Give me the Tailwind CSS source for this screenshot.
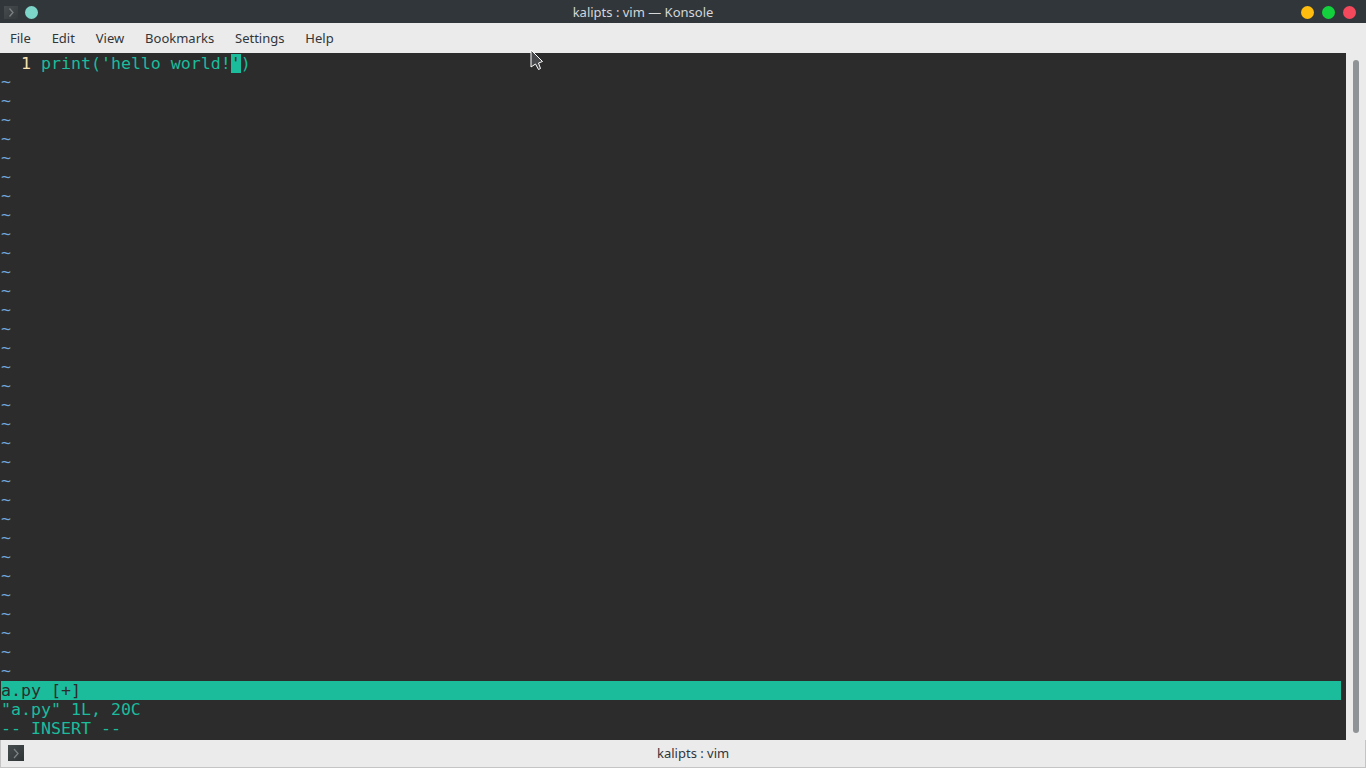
<!DOCTYPE html>
<html>
<head>
<meta charset="utf-8">
<script src="https://cdn.jsdelivr.net/npm/@tailwindcss/browser@4"></script>
</head>
<body class="w-[1366px] h-[768px] overflow-hidden bg-[#ebebeb] font-['Noto_Sans',sans-serif] relative">
<div class="h-[23px] bg-[#31363b] relative flex items-center text-[13px] text-[#d5d7d8] pt-[2px]">
  <div class="absolute inset-0 flex items-center justify-center pr-[80px] pt-[2px]"><span>kalipts : vim — Konsole</span></div>
  <svg class="ml-1 relative" width="14" height="13" viewBox="0 0 14 13"><defs><linearGradient id="g1" x1="0" y1="0" x2="1" y2="1"><stop offset="0" stop-color="#474c4e"/><stop offset="1" stop-color="#33383a"/></linearGradient></defs><rect width="14" height="13" fill="url(#g1)"/><path d="M5.5 2.5 l3.5 4 l-3.5 4" fill="none" stroke="#7b8183" stroke-width="1.3"/></svg>
  <div class="ml-[7px] w-[13px] h-[13px] rounded-full bg-[#7dd5c9] relative"></div>
  <div class="ml-auto mr-[10px] flex gap-2 relative">
    <div class="w-[13px] h-[13px] rounded-full bg-[#fdbc0e]"></div>
    <div class="w-[13px] h-[13px] rounded-full bg-[#13d13c]"></div>
    <div class="w-[13px] h-[13px] rounded-full bg-[#f4495c]"></div>
  </div>
</div>
<div class="h-[30px] bg-[#ebebeb] flex items-center pl-[10px] gap-[20.85px] text-[13px] text-[#31363b] pt-[1px]">
  <span>File</span><span>Edit</span><span>View</span><span>Bookmarks</span><span>Settings</span><span>Help</span>
</div>
<div class="flex h-[687px]">
  <div class="w-[1346px] bg-[#2c2c2c] pt-px pl-px font-['DejaVu_Sans_Mono',monospace] text-[16.6px] leading-[19px] text-[#1abc9c]">
    <div class="h-[19px] flex whitespace-pre"><span class="text-[#f9e2ae]">  1 </span><span>print('hello world!</span><span class="bg-[#1abc9c] text-[#2c2c2c] w-[10px] h-[19px] inline-block">'</span><span>)</span></div>
    <div class="text-[#6fa8dc] mt-[-1px] mb-[1px]">
<div class="h-[19px]">~</div><div class="h-[19px]">~</div><div class="h-[19px]">~</div><div class="h-[19px]">~</div><div class="h-[19px]">~</div><div class="h-[19px]">~</div><div class="h-[19px]">~</div><div class="h-[19px]">~</div><div class="h-[19px]">~</div><div class="h-[19px]">~</div><div class="h-[19px]">~</div><div class="h-[19px]">~</div><div class="h-[19px]">~</div><div class="h-[19px]">~</div><div class="h-[19px]">~</div><div class="h-[19px]">~</div><div class="h-[19px]">~</div><div class="h-[19px]">~</div><div class="h-[19px]">~</div><div class="h-[19px]">~</div><div class="h-[19px]">~</div><div class="h-[19px]">~</div><div class="h-[19px]">~</div><div class="h-[19px]">~</div><div class="h-[19px]">~</div><div class="h-[19px]">~</div><div class="h-[19px]">~</div><div class="h-[19px]">~</div><div class="h-[19px]">~</div><div class="h-[19px]">~</div><div class="h-[19px]">~</div><div class="h-[19px]">~</div>
    </div>
    <div class="h-[19px] w-[1340px] bg-[#1abc9c] text-[#2c2c2c]">a.py [+]</div>
    <div class="h-[19px]">"a.py" 1L, 20C</div>
    <div class="h-[19px]">-- INSERT --</div>
  </div>
  <div class="flex-1 relative">
    <div class="absolute left-[7px] top-[7px] w-[6px] h-[673px] rounded-[3px] bg-[#8f9396]"></div>
  </div>
</div>
<div class="h-[28px] border-l border-r border-b border-[#c4c4c4] flex items-center text-[13px] text-[#31363b] pt-[1px]">
  <svg class="ml-[7px] mt-[-3px]" width="16" height="16" viewBox="0 0 16 16"><defs><linearGradient id="g2" x1="0" y1="0" x2="1" y2="1"><stop offset="0" stop-color="#474c4e"/><stop offset="1" stop-color="#2e3335"/></linearGradient></defs><rect width="16" height="16" fill="url(#g2)"/><path d="M6 4 l4 4.5 l-4 4.5" fill="none" stroke="#7b8183" stroke-width="1.3"/></svg>
  <span class="ml-[633px]">kalipts : vim</span>
</div>
<svg class="absolute left-[530px] top-[49px]" width="14" height="22" viewBox="0 0 14 22"><path d="M1 1 L1 18 L5.5 15 L8.5 20.5 L10.5 19.5 L8.5 14 L12.5 12.5 Z" fill="#47494c" stroke="#ffffff" stroke-width="1"/></svg>
</body>
</html>
